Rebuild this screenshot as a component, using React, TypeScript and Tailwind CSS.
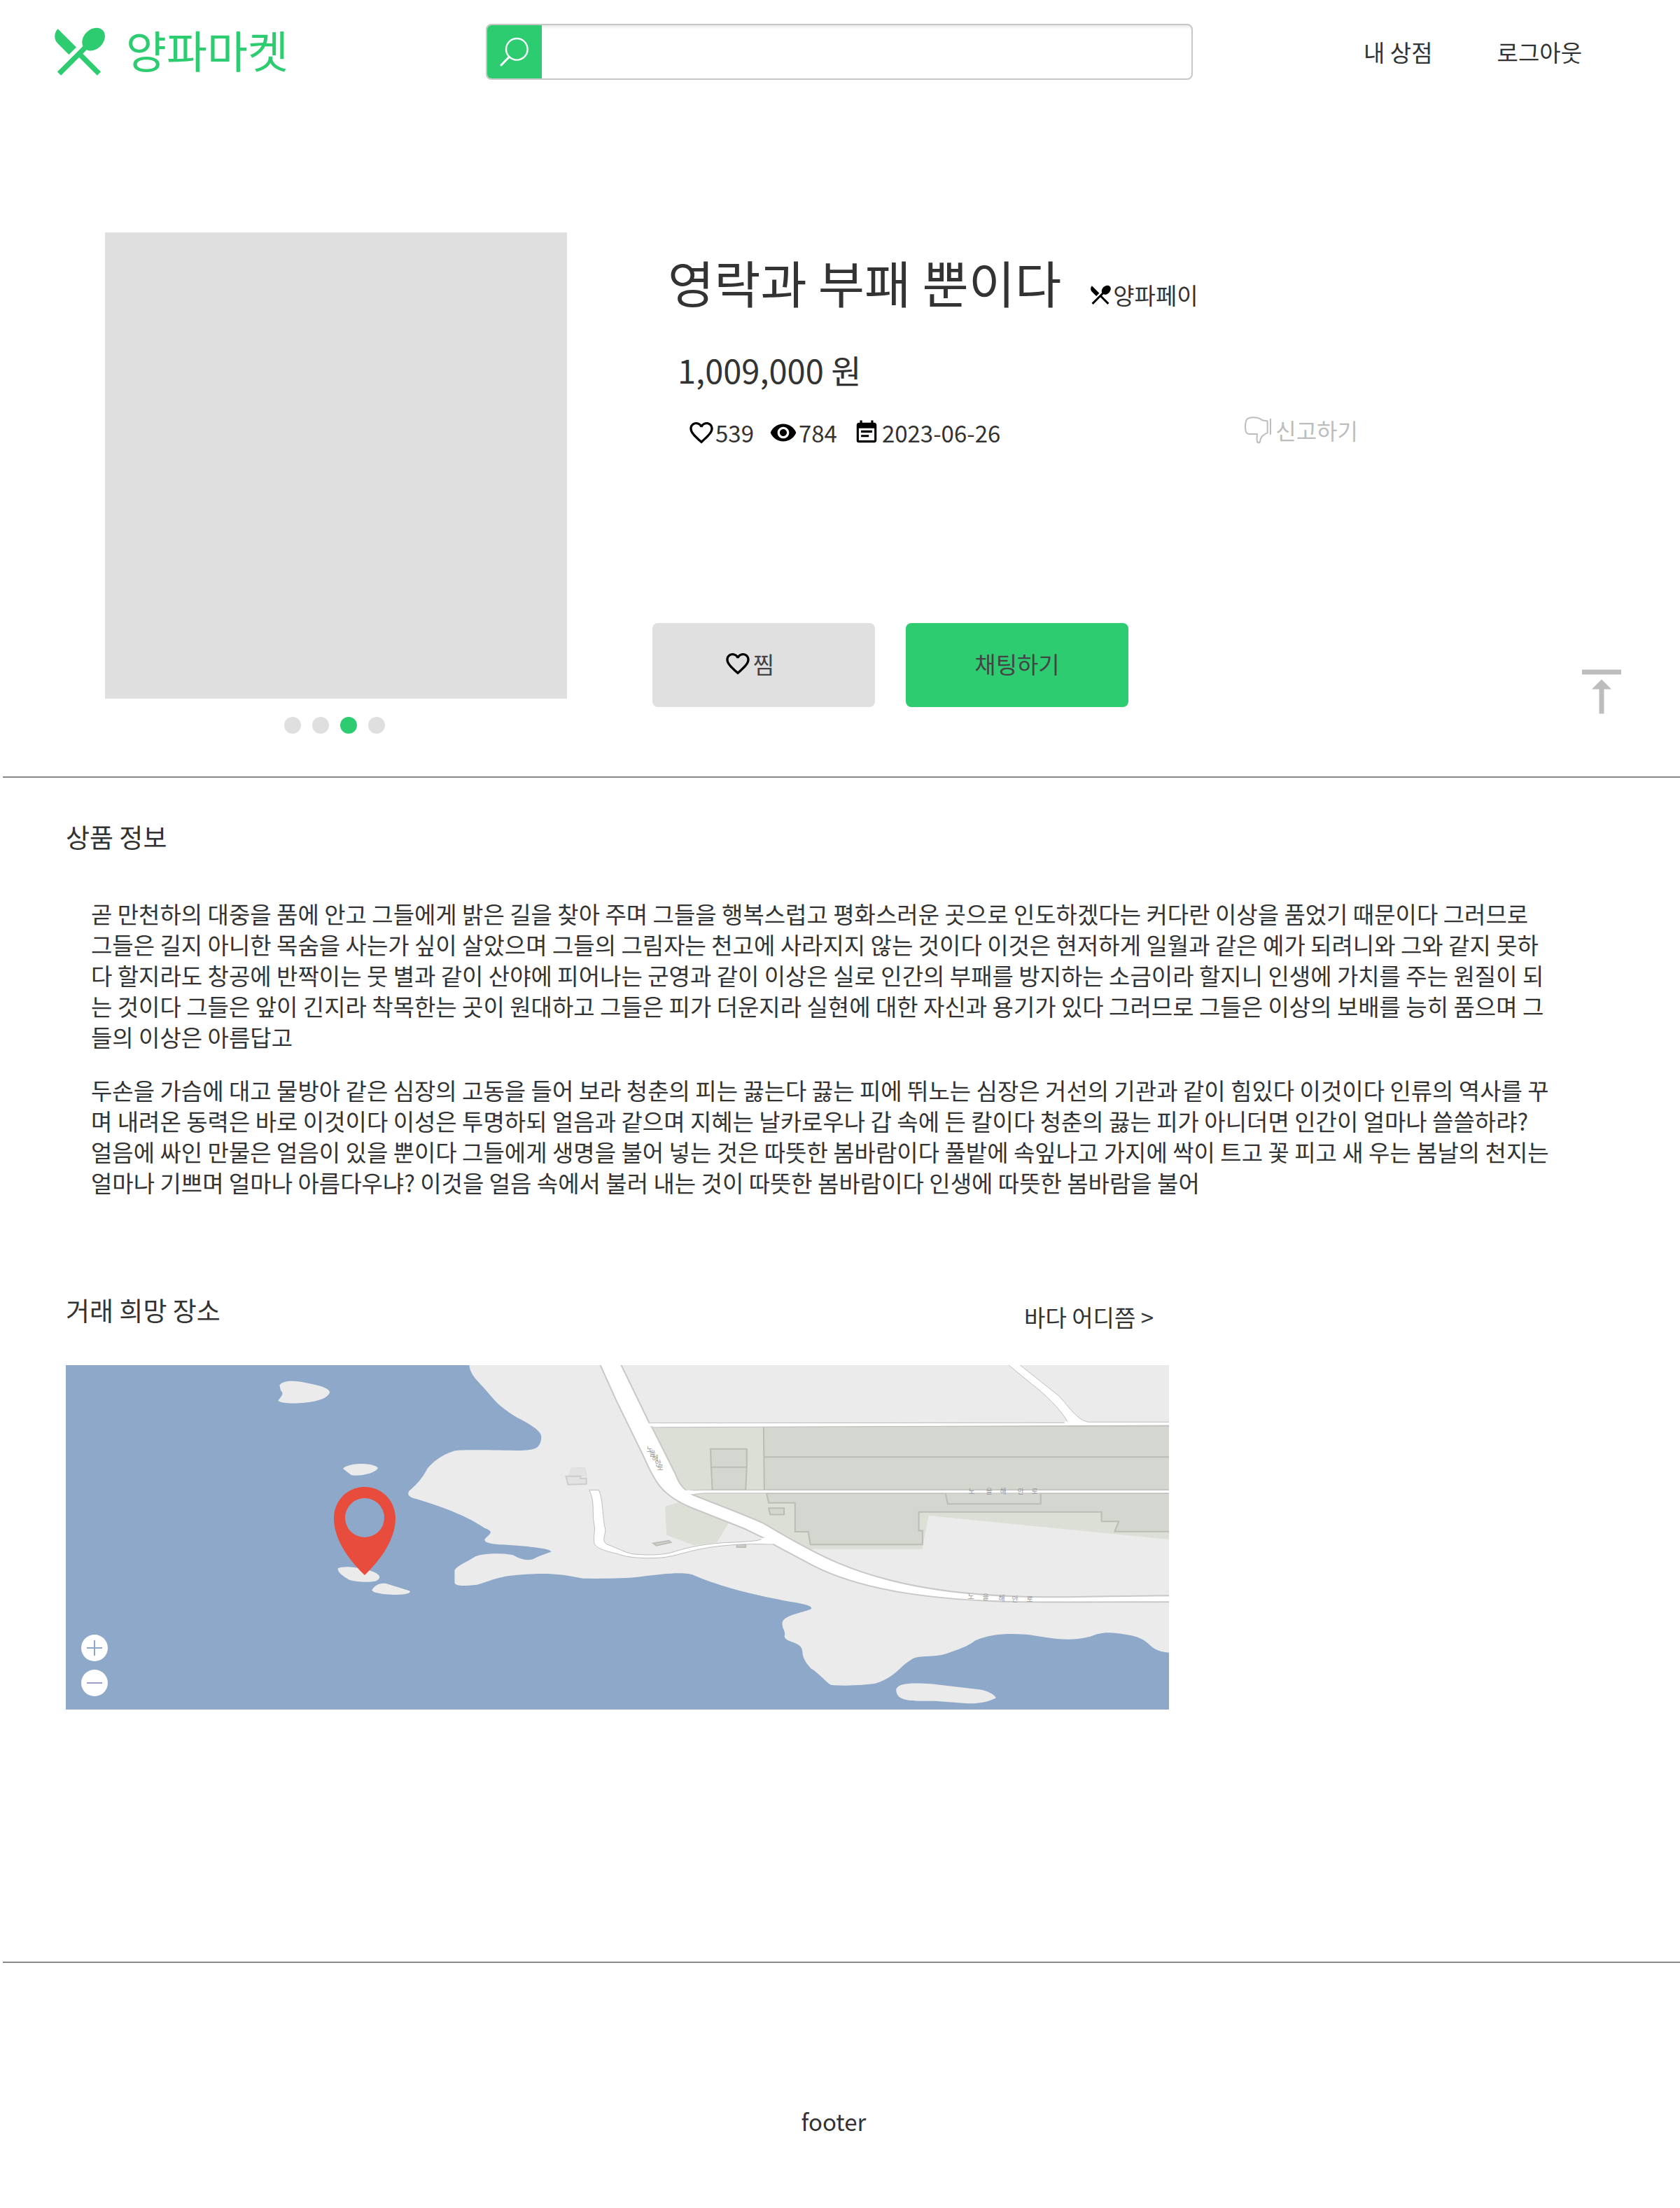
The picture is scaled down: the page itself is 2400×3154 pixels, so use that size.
import { MdEventNote, MdFavoriteBorder, MdRestaurantMenu, MdVerticalAlignTop, MdVisibility } from "react-icons/md";

const PARAGRAPHS = [
  "곧 만천하의 대중을 품에 안고 그들에게 밝은 길을 찾아 주며 그들을 행복스럽고 평화스러운 곳으로 인도하겠다는 커다란 이상을 품었기 때문이다 그러므로 그들은 길지 아니한 목숨을 사는가 싶이 살았으며 그들의 그림자는 천고에 사라지지 않는 것이다 이것은 현저하게 일월과 같은 예가 되려니와 그와 같지 못하다 할지라도 창공에 반짝이는 뭇 별과 같이 산야에 피어나는 군영과 같이 이상은 실로 인간의 부패를 방지하는 소금이라 할지니 인생에 가치를 주는 원질이 되는 것이다 그들은 앞이 긴지라 착목한는 곳이 원대하고 그들은 피가 더운지라 실현에 대한 자신과 용기가 있다 그러므로 그들은 이상의 보배를 능히 품으며 그들의 이상은 아름답고",
  "두손을 가슴에 대고 물방아 같은 심장의 고동을 들어 보라 청춘의 피는 끓는다 끓는 피에 뛰노는 심장은 거선의 기관과 같이 힘있다 이것이다 인류의 역사를 꾸며 내려온 동력은 바로 이것이다 이성은 투명하되 얼음과 같으며 지혜는 날카로우나 갑 속에 든 칼이다 청춘의 끓는 피가 아니더면 인간이 얼마나 쓸쓸하랴? 얼음에 싸인 만물은 얼음이 있을 뿐이다 그들에게 생명을 불어 넣는 것은 따뜻한 봄바람이다 풀밭에 속잎나고 가지에 싹이 트고 꽃 피고 새 우는 봄날의 천지는 얼마나 기쁘며 얼마나 아름다우냐? 이것을 얼음 속에서 불러 내는 것이 따뜻한 봄바람이다 인생에 따뜻한 봄바람을 불어",
];

function CoastMap() {
  return (
    <svg viewBox="0 0 1576 492" className="block h-auto w-full" role="img" aria-label="거래 희망 장소 지도">
      <rect width="1576" height="492" fill="#8ea8c9" />
      <g transform="scale(0.523 0.3444) translate(-27 -87)">
        <g fill="#ebebeb">
          <path d="M1129 87 C1132 135 1160 160 1188 215 C1215 265 1240 285 1260 305 C1300 335 1326 362 1326 385 C1324 430 1310 440 1270 441 C1220 441 1120 436 1090 442 C1050 460 1030 490 1015 515 C1000 560 980 590 965 608 C958 625 965 635 985 642 C1070 680 1130 720 1170 762 C1200 780 1185 785 1172 808 C1168 820 1180 827 1210 831 C1290 836 1345 848 1353 859 C1350 866 1325 872 1306 890 C1290 900 1270 893 1250 876 C1225 866 1170 866 1145 881 C1120 905 1095 920 1089 938 L1089 990 C1092 1003 1110 1005 1150 998 C1180 985 1210 962 1260 957 C1340 948 1370 950 1440 972 C1500 973 1560 972 1600 964 C1660 953 1720 942 1745 960 C1830 1015 1910 1040 1990 1064 C2050 1078 2064 1085 2064 1097 C2050 1112 1995 1120 1985 1150 C1980 1175 1995 1190 1990 1210 C1990 1240 2038 1230 2039 1275 C2040 1310 2055 1330 2062 1345 C2085 1365 2105 1405 2118 1414 C2160 1418 2210 1415 2240 1407 C2300 1375 2300 1340 2340 1305 C2360 1290 2400 1300 2430 1285 C2465 1265 2490 1255 2510 1230 C2555 1200 2600 1200 2650 1204 C2700 1212 2760 1240 2825 1213 C2860 1190 2885 1195 2930 1206 C3000 1225 2975 1270 3042 1280 L3042 87Z" />
          <path d="M611 170 C620 150 650 148 685 161 C725 172 748 185 748 200 C740 230 710 236 680 243 C640 248 612 243 607 234 C615 215 625 207 614 192Z" />
          <path d="M784 516 C800 490 870 490 880 514 C870 540 820 550 806 542Z" />
          <path d="M770 930 C780 920 815 923 845 934 C890 950 890 970 875 982 C850 990 820 986 800 977 C785 962 770 950 770 930Z" />
          <path d="M863 1020 C870 1000 885 988 902 993 L965 1023 C975 1033 950 1042 915 1039 C885 1037 865 1030 863 1020Z" />
          <path d="M2295 1432 C2300 1405 2340 1404 2390 1409 L2525 1433 C2550 1440 2563 1455 2568 1467 C2550 1483 2520 1492 2490 1490 L2400 1480 C2340 1480 2295 1485 2295 1432Z" />
        </g>
        <g fill="#dcdfd6">
          <path d="M1630 345 L3042 337 L3042 810 L2384 711 L2366 851 L2060 851 L1930 745 L1715 607Z" />
          <path d="M1664 673 L1740 640 L1838 740 L1806 822 L1742 834 L1668 792Z" />
        </g>
        <g fill="#d4d7cf" stroke="#babdb6" strokeWidth="2">
          <path vectorEffect="non-scaling-stroke" d="M1933 340 L3060 338 L3060 605 L1935 605Z M1933 468 H3060" />
          <path vectorEffect="non-scaling-stroke" d="M1788 435 H1887 V510 L1884 605 H1793 L1790 510Z M1790 510 H1887" />
          <path vectorEffect="non-scaling-stroke" d="M1941 618 L1947 658 H2019 V778 H2055 L2061 831 H2367 V774 H2357 V696 H2856 V735 H2903 L2892 777 H3060 V618Z" />
          <path vectorEffect="non-scaling-stroke" d="M2430 618 L2436 663 H2690 V618" />
          <path vectorEffect="non-scaling-stroke" d="M1947 680 H1989 V707 H1951Z" />
          <path vectorEffect="non-scaling-stroke" d="M1632 826 L1675 815 L1680 822 L1640 835Z M1860 832 H1884 V842 H1860Z" />
        </g>
        <g fill="#e2e2e2" stroke="#cccccc" strokeWidth="1">
          <path vectorEffect="non-scaling-stroke" stroke="#dddddd" d="M1408 514 L1445 512 L1450 547 H1400Z" />
          <path vectorEffect="non-scaling-stroke" strokeWidth="2" d="M1393 548 H1433 V557 H1449 V580 L1399 583Z" />
        </g>
        <g fill="#ffffff" stroke="#bdbdbd" strokeWidth="1">
          <path vectorEffect="non-scaling-stroke" d="M1457 605 H1483 C1496 650 1492 720 1501 770 C1500 800 1490 815 1505 830 C1540 850 1560 868 1580 871 C1620 876 1650 875 1680 865 C1730 840 1780 825 1850 822 C1900 818 1935 815 1930 800 L1970 830 H1940 C1890 827 1830 833 1790 842 C1730 855 1690 882 1650 886 C1600 890 1560 885 1535 870 C1500 858 1470 845 1470 820 C1468 790 1475 770 1469 740 C1465 700 1472 650 1457 605Z" />
          <path vectorEffect="non-scaling-stroke" d="M1620 327 L2765 326 C2745 270 2700 205 2665 165 L2597 80 L2628 80 L2740 215 C2770 265 2790 315 2820 323 L3060 323 L3060 337 L1632 345Z" />
          <path vectorEffect="non-scaling-stroke" d="M1725 609 C1745 604 1770 605 1800 605 L3060 605 V618 L1800 618 C1770 618 1755 618 1735 626Z" />
          <path vectorEffect="non-scaling-stroke" strokeWidth="2" stroke="#c8c8c8" d="M1485 80 L1530 232 L1605 465 C1635 570 1655 628 1735 678 L1880 765 L1935 805 L1965 835 L2070 920 C2200 1020 2400 1070 2700 1070 L3060 1069 L3060 1043 C2900 1042 2760 1055 2620 1046 C2400 1035 2250 980 2140 910 C2060 860 1980 785 1930 741 C1870 700 1780 650 1740 625 C1700 590 1700 560 1690 532 L1630 350 L1621 327 L1542 80Z" />
          <path stroke="none" d="M1600 329 L1650 329 L1650 343 L1633 343 Z M2755 320 L2820 325 V334 H2755Z M1925 806 L1945 800 L1978 828 H1940Z M1715 606 L1740 607 L1742 622 L1730 622Z" />
        </g>
      </g>
      <g fill="#9a9a9a" fontSize="10" textAnchor="middle">
        <text x="834" y="124">노</text>
        <text x="838" y="130">을</text>
        <text x="842" y="137">해</text>
        <text x="846" y="144">안</text>
        <text x="849" y="150">로</text>
        <text x="1294" y="184">노</text>
        <text x="1319" y="184">을</text>
        <text x="1339" y="184">해</text>
        <text x="1364" y="184">안</text>
        <text x="1384" y="184">로</text>
        <text x="1293" y="334">노</text>
        <text x="1314" y="335">을</text>
        <text x="1337" y="337">해</text>
        <text x="1356" y="338">안</text>
        <text x="1377" y="338">로</text>
      </g>
      <path
        fill="#e74c3c"
        fillRule="evenodd"
        d="M427 174 C402 174 383 194 383 219 C383 247 402 276 427 300 C452 276 471 247 471 219 C471 194 452 174 427 174Z M427 190 A28 28 0 1 1 427 246 A28 28 0 1 1 427 190Z"
      />
    </svg>
  );
}

function SearchIcon() {
  return (
    <svg viewBox="106 86 126 126" className="size-[42px]" fill="none" stroke="#ffffff" strokeWidth="7" strokeLinecap="round">
      <circle cx="179" cy="138" r="46" />
      <path d="M146 171 L112 206" strokeWidth="9" />
    </svg>
  );
}

function ThumbDownIcon() {
  return (
    <svg viewBox="54 80 120 120" className="size-10" fill="none" stroke="#bdbdbd" strokeWidth="6" strokeLinejoin="round">
      <path d="M152 102 C146 100 134 102 127 97 C118 90 105 87 92 87 C78 87 65 88 61 100 C57 112 56 125 58 140 C59 152 64 158 74 158 L108 158 C106 172 107 178 107 186 C108 198 120 198 121 187 C122 175 130 166 136 162 C141 157 146 155 152 153Z" />
      <path d="M165 92 V160" />
    </svg>
  );
}

export default function App() {
  return (
    <div className="min-h-screen bg-white font-['Noto_Sans_CJK_KR','Noto_Sans',sans-serif] text-[33px] leading-[44px] text-[#333333]">
      <header className="flex h-[148px] items-start pr-[140px] pl-[68px]">
        <a href="#" className="flex h-[148px] w-[626px] shrink-0 items-start gap-[22px] text-[63px] leading-[88px] text-[#2ecc71]">
          <MdRestaurantMenu className="mt-[28px] size-[90px]" />
          <span className="mt-[26px]">양파마켓</span>
        </a>
        <form className="mt-[34px] flex h-20 w-[1010px] shrink-0 overflow-hidden rounded-lg border-2 border-[#c8c8c8]">
          <button type="button" aria-label="검색" className="flex w-[78px] items-center justify-center bg-[#2ecc71]">
            <SearchIcon />
          </button>
          <input type="search" aria-label="검색어" className="min-w-0 flex-1 px-4 shadow-[inset_0_4px_6px_-4px_rgba(0,0,0,0.2)] outline-none" />
        </form>
        <nav className="mt-[52px] ml-auto flex gap-[92px]">
          <a href="#">내 상점</a>
          <a href="#">로그아웃</a>
        </nav>
      </header>

      <main>
        <section className="ml-1 flex h-[963px] items-start border-b-2 border-[#888888] pt-[184px] pr-[70px] pl-[146px]">
          <div className="w-[660px] shrink-0">
            <div className="h-[666px] bg-[#dfdfdf]" />
            <div className="mt-[26px] flex justify-center gap-4 pr-1">
              <button type="button" aria-label="사진 1" className="size-6 rounded-full bg-[#dfdfdf]" />
              <button type="button" aria-label="사진 2" className="size-6 rounded-full bg-[#dfdfdf]" />
              <button type="button" aria-label="사진 3" className="size-6 rounded-full bg-[#2ecc71]" />
              <button type="button" aria-label="사진 4" className="size-6 rounded-full bg-[#dfdfdf]" />
            </div>
          </div>

          <div className="ml-[122px] w-[1010px] shrink-0">
            <div className="mt-[18px] flex items-end pl-[22px]">
              <h1 className="text-[72px] leading-[104px]">영락과 부패 뿐이다</h1>
              <span className="mb-[11px] ml-[38px] flex items-center">
                <MdRestaurantMenu className="size-9 text-black" />
                양파페이
              </span>
            </div>
            <p className="mt-[34px] pl-[36px] text-[47px] leading-[80px]">1,009,000 원</p>
            <div className="mt-[24px] flex items-start justify-between pr-[2px] pl-[50px]">
              <div className="flex items-center gap-[22px] pt-1">
                <span className="flex items-center"><MdFavoriteBorder className="size-10 text-black" />539</span>
                <span className="flex items-center gap-[2px]"><MdVisibility className="size-10 text-black" />784</span>
                <span className="flex items-center gap-[2px]"><MdEventNote className="size-10 p-px text-black" />2023-06-26</span>
              </div>
              <button type="button" className="flex items-center gap-1 text-[32px] text-[#bdbdbd]"><ThumbDownIcon />신고하기</button>
            </div>
            <div className="mt-[250px] flex gap-[44px]">
              <button type="button" className="flex h-[120px] w-[318px] items-center justify-center gap-[2px] rounded-lg bg-[#e0e0e0] pr-[42px] pb-1 text-[#444444]">
                <MdFavoriteBorder className="size-10 text-black" />찜
              </button>
              <button type="button" className="h-[120px] w-[318px] rounded-lg bg-[#2ecc71] pb-1 text-[#444444]">채팅하기</button>
            </div>
          </div>

          <a href="#" aria-label="맨 위로" className="mt-[614px] ml-auto text-[#bdbdbd]">
            <MdVerticalAlignTop className="size-[84px]" />
          </a>
        </section>

        <section className="pt-[58px] pr-[183px] pl-[94px]">
          <h2 className="text-[37px] leading-[52px]">상품 정보</h2>
          <div className="mt-[62px] flex flex-col gap-8 pl-[36px]">
            {PARAGRAPHS.map((text) => (
              <p key={text.slice(0, 6)}>{text}</p>
            ))}
          </div>
        </section>

        <section className="mt-[134px] ml-[94px] w-[1576px] max-w-full">
          <div className="flex items-end justify-between pr-[22px]">
            <h2 className="pb-[6px] text-[37px] leading-[52px]">거래 희망 장소</h2>
            <a href="#">바다 어디쯤 &gt;</a>
          </div>
          <div className="relative mt-[47px]">
            <CoastMap />
            <div className="absolute bottom-[19px] left-[22px] flex flex-col gap-3">
              <button type="button" aria-label="확대" className="size-[38px] rounded-full bg-white">
                <svg viewBox="0 0 38 38" stroke="#8ea8c9" strokeWidth="2"><path d="M8 19H30M19 8V30" /></svg>
              </button>
              <button type="button" aria-label="축소" className="size-[38px] rounded-full bg-white">
                <svg viewBox="0 0 38 38" stroke="#9a9fd0" strokeWidth="2"><path d="M8 19H30" /></svg>
              </button>
            </div>
          </div>
        </section>
      </main>

      <footer className="mt-[360px] ml-1 border-t-2 border-[#888888] pt-[204px] pr-[22px] pb-[90px] text-center">footer</footer>
    </div>
  );
}
